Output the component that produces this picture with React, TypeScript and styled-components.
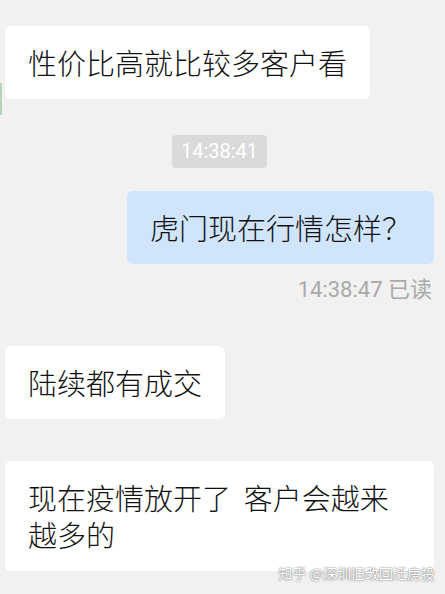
import React from "react";
import styled, { createGlobalStyle } from "styled-components";

const Global = createGlobalStyle`
  html, body { margin: 0; padding: 0; background: #f1f1f1; }
  #root { width: 445px; height: 594px; }
`;

const Page = styled.div`
  position: relative;
  width: 445px;
  height: 594px;
  overflow: hidden;
  box-sizing: border-box;
  padding: 26px 11px 0 5px;
  background: #f1f1f1;
  display: flex;
  flex-direction: column;
  font-family: "Noto Sans CJK SC", "Noto Sans", sans-serif;
`;

const Row = styled.div<{ $side: "left" | "right" | "center"; $mt?: number }>`
  display: flex;
  justify-content: ${(p) =>
    p.$side === "left" ? "flex-start" : p.$side === "right" ? "flex-end" : "center"};
  margin-top: ${(p) => p.$mt ?? 0}px;
`;

const Bubble = styled.div<{ $mine?: boolean; $wide?: boolean }>`
  box-sizing: border-box;
  max-width: 429px;
  width: ${(p) => (p.$wide ? "429px" : "auto")};
  padding: 18px 23px;
  border-radius: 6px;
  background: ${(p) => (p.$mine ? "#d0e5fc" : "#ffffff")};
  color: #111111;
  font-size: 29px;
  font-weight: 300;
  line-height: 37px;
  white-space: pre-wrap;
`;

const TimePill = styled.div`
  background: #dadada;
  color: #ffffff;
  border-radius: 4px;
  padding: 0 9px;
  height: 33px;
  line-height: 33px;
  font-family: Roboto, "Noto Sans CJK SC", sans-serif;
  font-size: 20px;
`;

const ReadLabel = styled.div`
  color: #a9a9a9;
  font-family: Roboto, "Noto Sans CJK SC", sans-serif;
  font-size: 22px;
  line-height: 28px;
  padding-right: 2px;
`;

const EdgeStrip = styled.div`
  position: absolute;
  left: 0;
  top: 83px;
  width: 2px;
  height: 32px;
  background: #b9d3b9;
`;

const Watermark = styled.div`
  position: absolute;
  right: 10px;
  bottom: 11px;
  color: #ffffff;
  font-size: 14px;
  line-height: 20px;
  text-shadow: 0 0 2px rgba(0, 0, 0, 0.55), 0 0 1px rgba(0, 0, 0, 0.3);
`;

export default function App() {
  return (
    <>
      <Global />
      <Page>
        <EdgeStrip />
        <Row $side="left">
          <Bubble>性价比高就比较多客户看</Bubble>
        </Row>
        <Row $side="center" $mt={36}>
          <TimePill>14:38:41</TimePill>
        </Row>
        <Row $side="right" $mt={23}>
          <Bubble $mine>虎门现在行情怎样？</Bubble>
        </Row>
        <Row $side="right" $mt={12}>
          <ReadLabel>14:38:47 已读</ReadLabel>
        </Row>
        <Row $side="left" $mt={42}>
          <Bubble>陆续都有成交</Bubble>
        </Row>
        <Row $side="left" $mt={42}>
          <Bubble $wide>{"现在疫情放开了  客户会越来\n越多的"}</Bubble>
        </Row>
        <Watermark>知乎 @深圳旧改回迁房投</Watermark>
      </Page>
    </>
  );
}
